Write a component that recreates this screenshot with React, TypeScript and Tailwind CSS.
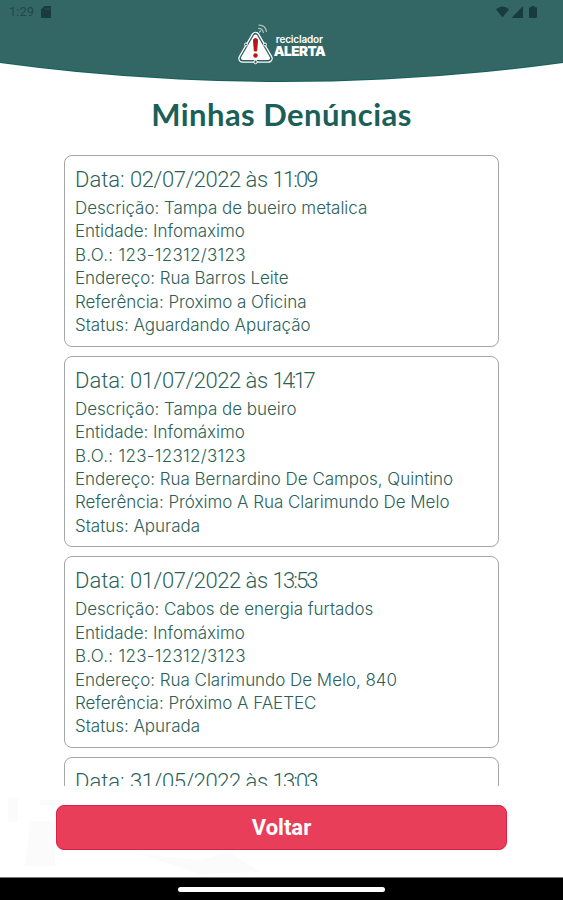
type Report = {
  date: string;
  time: string;
  lines: string[];
};

const REPORTS: Report[] = [
  {
    date: '02/07/2022 às',
    time: '11:09',
    lines: [
      'Descrição: Tampa de bueiro metalica',
      'Entidade: Infomaximo',
      'B.O.: 123-12312/3123',
      'Endereço: Rua Barros Leite',
      'Referência: Proximo a Oficina',
      'Status: Aguardando Apuração',
    ],
  },
  {
    date: '01/07/2022 às',
    time: '14:17',
    lines: [
      'Descrição: Tampa de bueiro',
      'Entidade: Infomáximo',
      'B.O.: 123-12312/3123',
      'Endereço: Rua Bernardino De Campos, Quintino',
      'Referência: Próximo A Rua Clarimundo De Melo',
      'Status: Apurada',
    ],
  },
  {
    date: '01/07/2022 às',
    time: '13:53',
    lines: [
      'Descrição: Cabos de energia furtados',
      'Entidade: Infomáximo',
      'B.O.: 123-12312/3123',
      'Endereço: Rua Clarimundo De Melo, 840',
      'Referência: Próximo A FAETEC',
      'Status: Apurada',
    ],
  },
  {
    date: '31/05/2022 às',
    time: '13:03',
    lines: [],
  },
];

function StatusBar() {
  return (
    <div className="flex h-6 items-center justify-between pl-[9px] pr-[25px] text-[#183b3e]">
      <div className="flex items-center gap-[7px]">
        <span className="font-[Roboto,sans-serif] text-[13px] leading-6 text-[#24484a]">1:29</span>
        <svg width="10" height="12" viewBox="0 0 10 12" fill="currentColor">
          <path d="M3.600 0H9a1 1 0 0 1 1 1v10a1 1 0 0 1-1 1H1a1 1 0 0 1-1-1V3.600z" />
          <path d="M4 2v2M6 2v2M8 2v2" stroke="#336766" strokeWidth="0.600" />
        </svg>
      </div>
      <svg width="42" height="12" viewBox="0 0 42 12" fill="currentColor">
        <path d="M0 3.200Q6.500-2.200 13 3.200L6.500 11.500z" />
        <path d="M27 0v12H15.500z" />
        <path d="M35.500 0h3v1.200h1.500a1 1 0 0 1 1 1V11a1 1 0 0 1-1 1h-6a1 1 0 0 1-1-1V2.200a1 1 0 0 1 1-1h1.500z" />
      </svg>
    </div>
  );
}

function Logo() {
  return (
    <div className="flex justify-center">
      <svg width="36" height="41" viewBox="0 0 36 41" fill="none">
        <path
          d="M17.500 12L30.500 34.500H4.500z"
          stroke="#fff"
          strokeWidth="8.500"
          strokeLinejoin="round"
        />
        <path
          d="M17.500 12L30.500 34.500H4.500z"
          stroke="#2f5f5f"
          strokeWidth="6"
          strokeLinejoin="round"
        />
        <path d="M17.500 12.500L30 34H5z" fill="#fff" stroke="#fff" strokeWidth="4" strokeLinejoin="round" />
        <path d="M15.500 15.500Q17.500 13.500 19.500 15.500L18.700 27h-2.400z" fill="#b5161d" stroke="#b5161d" />
        <circle cx="17.500" cy="31.500" r="2.200" fill="#b5161d" />
        <g fill="#2f6663" stroke="#fff">
          <circle cx="17.500" cy="38" r="1.700" />
          <circle cx="8" cy="20.500" r="1.500" />
          <circle cx="27" cy="20.500" r="1.500" />
        </g>
        <path
          d="M20 4.500Q24.500 4 25.500 9M20.500 1.200Q27.500 .8 28.500 8M21 8.500l2-2"
          stroke="#a9c0bf"
          strokeWidth="1.200"
        />
      </svg>
      <div className="flex flex-col pt-[9px] font-[Inter,sans-serif] text-white">
        <span className="pl-[2px] text-[10px] font-semibold leading-[12px] tracking-[-0.15px]">reciclador</span>
        <span className="text-[13.500px] font-black leading-[13px] tracking-[-0.5px]">ALERTA</span>
      </div>
    </div>
  );
}

function ReportCard({ report }: { report: Report }) {
  return (
    <article className="h-[191.700px] shrink-0 rounded-lg border-[1.500px] border-[#a3a8a7] px-[10px] pt-[9px] text-[#2c5f58]">
      <h2 className="mb-[3px] whitespace-nowrap font-[Roboto,sans-serif] text-[22px] font-light leading-[29px]">
        Data: <span className="tracking-[-0.450px]">{report.date} </span>
        <span className={report.time === '14:17' ? 'tracking-[-2.600px]' : 'tracking-[-1.900px]'}>
          {report.time}
        </span>
      </h2>
      {report.lines.map((line) => (
        <p
          key={line}
          className={`whitespace-nowrap font-[Inter,sans-serif] text-[17px] font-light leading-[23.400px] ${
            line.startsWith('B.O.') ? 'tracking-[0.300px]' : 'tracking-[-0.030px]'
          }`}
        >
          {line}
        </p>
      ))}
    </article>
  );
}

export default function App() {
  return (
    <div className="relative flex h-[900px] w-[563px] flex-col overflow-hidden bg-white">
      <header className="h-[82px] shrink-0 bg-[#14605a] [clip-path:circle(2090px_at_50%_-2008px)]">
        <div className="h-full bg-[#336766] [clip-path:circle(2090px_at_50%_-2009px)]">
          <StatusBar />
          <Logo />
        </div>
      </header>

      <h1 className="mt-[10px] h-[45px] shrink-0 text-center font-[Lato,sans-serif] text-[31px] font-bold leading-[44px] tracking-[0.450px] text-[#1a5f58]">
        Minhas Denúncias
      </h1>

      <main className="mx-16 mt-[18px] flex h-[631px] shrink-0 flex-col gap-[9px] overflow-hidden">
        {REPORTS.map((report) => (
          <ReportCard key={report.date + report.time} report={report} />
        ))}
      </main>

      <div className="relative h-[91px] shrink-0 px-[56px] pt-[19px]">
        {/* faint watermark behind the button */}
        <svg className="absolute left-0 top-0" width="563" height="91" fill="#fbfbfb">
          <path d="M8 12h10v24H8zM40 14h30v5H40zM30 35h25v45H25zM140 68l60 6 30-8 30 20-60 2z" />
        </svg>
        <button className="relative h-[45px] w-[451px] rounded-lg border border-[#dc1f45] bg-[#e83e5a] font-[Roboto,sans-serif] text-[22px] font-bold leading-[42px] text-white">
          Voltar
        </button>
      </div>

      <footer className="flex h-[23px] shrink-0 justify-center border-t border-[#777] bg-black pt-[9px]">
        <div className="h-[5px] w-[207px] rounded-full bg-white" />
      </footer>
    </div>
  );
}
